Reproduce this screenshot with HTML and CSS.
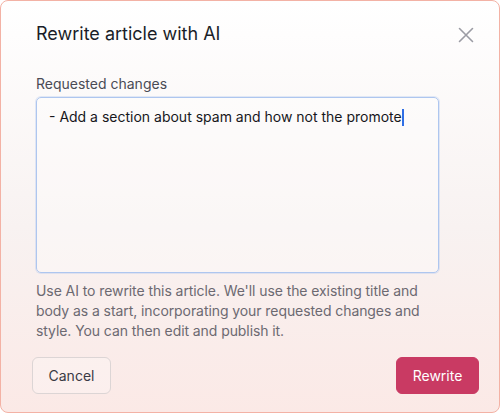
FILE: index.html
```html
<!DOCTYPE html>
<html lang="en">
<head>
<meta charset="utf-8">
<title>Rewrite article with AI</title>
<link rel="stylesheet" href="styles.css">
</head>
<body>
<div class="dialog">
  <div class="header">
    <h1 class="title">Rewrite article with AI</h1>
    <button class="close" aria-label="Close">
      <svg width="16" height="16" viewBox="0 0 16 16" fill="none" stroke="#9b9ca4" stroke-width="1.6" stroke-linecap="round"><path d="M1.5 1.5 L14.5 14.5 M14.5 1.5 L1.5 14.5"/></svg>
    </button>
  </div>
  <div class="body">
    <label class="label">Requested changes</label>
    <div class="input">- Add a section about spam and how not the promote<span class="caret"></span></div>
    <p class="help">Use AI to rewrite this article. We'll use the existing title and body as a start, incorporating your requested changes and style. You can then edit and publish it.</p>
  </div>
  <div class="footer">
    <button class="btn btn-secondary">Cancel</button>
    <button class="btn btn-primary">Rewrite</button>
  </div>
</div>
</body>
</html>
```
FILE: styles.css
```css
* { box-sizing: border-box; }
html, body { margin: 0; padding: 0; background: #ffffff; }
body { font-family: Inter, "Noto Sans", sans-serif; }

.dialog {
  width: 500px;
  height: 413px;
  border: 1px solid #f3b2a5;
  border-radius: 8px;
  background: linear-gradient(180deg, #ffffff 0%, #f8f2f1 55%, #fbe9e6 100%);
  display: flex;
  flex-direction: column;
  overflow: hidden;
}

.header {
  display: flex;
  justify-content: space-between;
  align-items: flex-start;
  padding: 21px 25px 0 35px;
}
.title {
  margin: 0;
  font-size: 18px;
  line-height: 24px;
  font-weight: 400;
  color: #1a1d28;
}
.close {
  margin-top: 5px;
  padding: 0;
  border: 0;
  background: none;
  width: 16px;
  height: 16px;
  display: block;
}
.close svg { display: block; }

.body {
  padding: 28px 0 0 35px;
  display: flex;
  flex-direction: column;
}
.label {
  font-size: 14px;
  line-height: 20px;
  color: #4a4b55;
}
.input {
  margin-top: 3px;
  width: 403px;
  height: 176px;
  border: 1px solid #aec6ef;
  border-radius: 5px;
  box-shadow: 0 0 0 1px rgba(174, 198, 239, 0.35);
  background: rgba(255, 255, 255, 0.35);
  padding: 9px 12px;
  font-size: 14px;
  line-height: 20px;
  color: #17171c;
}
.caret {
  display: inline-block;
  width: 2px;
  height: 17px;
  background: #2f6ee5;
  vertical-align: -4px;
}
.help {
  margin: 8px 0 0 0;
  width: 410px;
  font-size: 14px;
  line-height: 20px;
  letter-spacing: -0.08px;
  color: #6c6971;
}

.footer {
  margin-top: auto;
  display: flex;
  justify-content: space-between;
  padding: 0 20px 18px 31px;
}
.btn {
  height: 37px;
  border-radius: 6px;
  font-family: Inter, "Noto Sans", sans-serif;
  font-size: 14px;
  padding: 0 15px;
}
.btn-secondary {
  width: 79px;
  background: rgba(255, 255, 255, 0.25);
  border: 1px solid #dcd5d5;
  color: #3a3a44;
}
.btn-primary {
  width: 83px;
  background: #c93a63;
  border: 1px solid #c93a63;
  color: #ffffff;
}
```
